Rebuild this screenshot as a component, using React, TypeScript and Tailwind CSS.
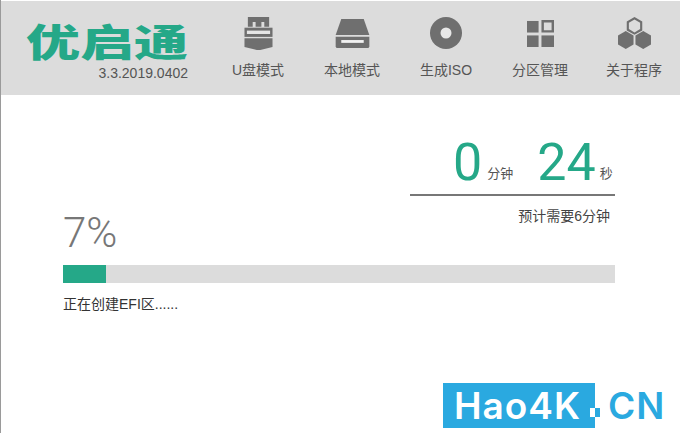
import React from 'react';

const CJK = "font-['Liberation_Sans','Noto_Sans_CJK_SC',sans-serif]";

const UsbIcon = () => (
  <svg width="29" height="33" viewBox="0 0 30 34" className="text-[#6f6f6f]" fill="currentColor">
    <path d="M4 0h22v10h-5V5h-3v5h-6V5H9v5H4z" />
    <rect x="0.5" y="11" width="29" height="9.5" />
    <rect x="3" y="14" width="24" height="3.5" fill="#e6e6e6" />
    <path d="M0.5 22h29v9l-14.5 3.5L0.5 31z" />
  </svg>
);

const DiskIcon = () => (
  <svg width="35" height="29" viewBox="0 0 36 31" className="text-[#6f6f6f]" fill="currentColor">
    <path d="M6 0h24l6 17H0z" />
    <path d="M0 19h36v10a2 2 0 0 1-2 2H2a2 2 0 0 1-2-2z" />
    <rect x="6" y="22.5" width="24" height="3" fill="#f2f2f2" />
  </svg>
);

const DiscIcon = () => (
  <svg width="32" height="32" viewBox="0 0 32 32">
    <circle cx="16" cy="16" r="16" fill="#6f6f6f" />
    <circle cx="16" cy="16" r="5.500" fill="#e8e8e8" />
  </svg>
);

const PartitionIcon = () => (
  <svg width="27" height="27" viewBox="0 0 28 28" fill="#6f6f6f">
    <rect x="0" y="1" width="12" height="12" />
    <path d="M15 0h13v13H15zM17.500 2.500v8h8v-8z" fillRule="evenodd" />
    <rect x="0" y="16" width="12" height="12" />
    <rect x="15" y="16" width="13" height="12" />
  </svg>
);

const HexIcon = () => (
  <svg width="35" height="32" viewBox="0 0 36 33" fill="#6f6f6f">
    <path d="M18 0l8 4.600v9.200l-8 4.600-8-4.600V4.600zM18 2.500l-5.800 3.400v6.600l5.800 3.400 5.800-3.400V5.900z" fillRule="evenodd" />
    <path d="M9 14.500l8 4.600v9.200L9 33l-8-4.700v-9.200z" />
    <path d="M27 14.500l8 4.600v9.200L27 33l-8-4.700v-9.200z" />
  </svg>
);

const navItems = [
  { label: 'U盘模式', icon: <UsbIcon /> },
  { label: '本地模式', icon: <DiskIcon /> },
  { label: '生成ISO', icon: <DiscIcon /> },
  { label: '分区管理', icon: <PartitionIcon /> },
  { label: '关于程序', icon: <HexIcon /> },
];

const App = () => {
  return (
    <div className={`relative w-[680px] h-[433px] overflow-hidden bg-white border-l border-[#9a9a9a] ${CJK}`}>
      {/* header */}
      <div className="flex h-[95px] bg-[#dcdcdc] border-t border-white">
        <div className="w-[210px] shrink-0 pl-[23px] pt-[20px]">
          <div className="w-[166px] h-[38px] origin-top scale-y-[0.7] whitespace-nowrap text-center text-[54px] leading-[54px] font-black text-[#25a888] font-['Noto_Sans_CJK_SC',sans-serif]">
            优启通
          </div>
          <div className="mt-[6px] w-[164px] whitespace-nowrap text-right text-[14px] leading-[16px] text-[#555]">3.3.2019.0402</div>
        </div>
        {navItems.map((item) => (
          <div key={item.label} className="flex w-[94px] shrink-0 flex-col items-center">
            <div className="flex h-[36px] mt-[14px] items-center justify-center">{item.icon}</div>
            <div className="mt-[10px] whitespace-nowrap text-[14px] leading-[18px] text-[#555]">{item.label}</div>
          </div>
        ))}
      </div>

      {/* timer */}
      <div className="ml-[409px] mt-[38px] w-[205px]">
        <div className="flex h-[63px] items-end border-b-2 border-[#777] pl-[43px] pb-[5px] whitespace-nowrap">
          <span className="text-[52px] leading-[52px] text-[#25a888] font-['Roboto',sans-serif]">0</span>
          <span className="ml-[5px] mb-[8px] text-[13px] leading-[14px] text-[#555]">分钟</span>
          <span className="ml-[24px] text-[52px] leading-[52px] text-[#25a888] font-['Roboto',sans-serif]">24</span>
          <span className="ml-[4px] mb-[8px] text-[13px] leading-[14px] text-[#555]">秒</span>
        </div>
        <div className="mt-[12px] pr-[5px] text-right text-[14px] leading-[16px] text-[#444]">预计需要6分钟</div>
      </div>

      {/* progress */}
      <div className="ml-[62px] w-[552px]">
        <div className="text-[42px] leading-[44px] font-light text-[#777] mt-[-13px] font-['Roboto',sans-serif]">7%</div>
        <div className="mt-[10px] h-[18px] bg-[#dcdcdc]">
          <div className="h-full w-[43px] bg-[#25a888]" />
        </div>
        <div className="mt-[13px] text-[14px] leading-[16px] text-[#333]">正在创建EFI区......</div>
      </div>

      {/* watermark */}
      <div className="absolute left-[442px] top-[383px] flex items-center">
        <div className="flex h-[45px] w-[152px] items-center justify-center bg-[#2aa9e0] pr-[3px] text-[37px] font-semibold leading-[45px] tracking-[1px] text-white font-['Inter',sans-serif]">
          Hao4K
        </div>
        <div className="absolute left-[147px] top-[25px] flex h-[9px] w-[10px]">
          <div className="w-[5px] bg-white" />
          <div className="w-[5px] bg-[#2aa9e0]" />
        </div>
        <div className="ml-[13px] text-[37px] font-semibold leading-[45px] tracking-[1px] text-[#2aa9e0] font-['Inter',sans-serif]">CN</div>
      </div>
    </div>
  );
};

export default App;
